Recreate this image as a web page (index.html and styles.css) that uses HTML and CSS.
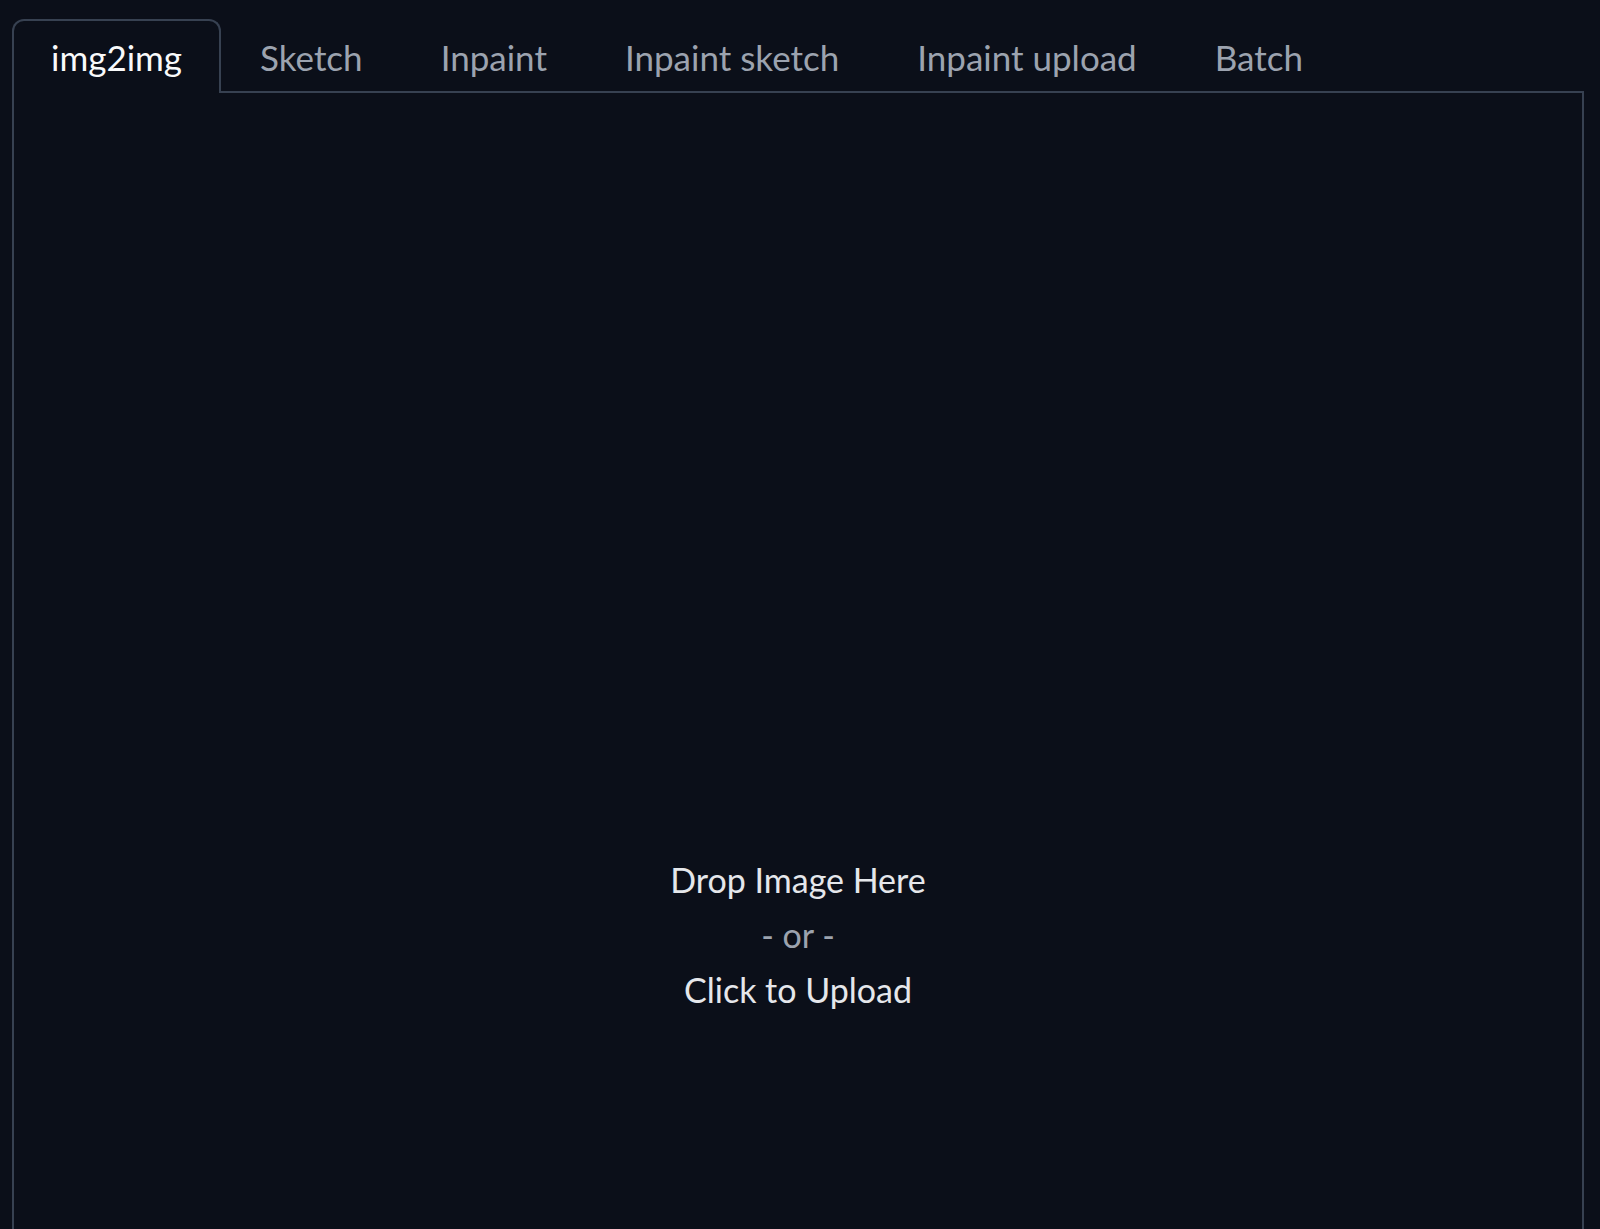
FILE: index.html
```html
<!DOCTYPE html>
<html lang="en">
<head>
<meta charset="utf-8">
<title>img2img</title>
<link rel="stylesheet" href="styles.css">
</head>
<body>
<div class="tabs">
  <div class="tabnav">
    <button class="tab active">img2img</button>
    <button class="tab">Sketch</button>
    <button class="tab">Inpaint</button>
    <button class="tab">Inpaint sketch</button>
    <button class="tab">Inpaint upload</button>
    <button class="tab">Batch</button>
  </div>
  <div class="panel">
    <div class="drop">
      <span class="line">Drop Image Here</span>
      <span class="line or">- or -</span>
      <span class="line">Click to Upload</span>
    </div>
  </div>
</div>
</body>
</html>
```

FILE: styles.css
```css
html, body {
  margin: 0;
  height: 100%;
  overflow: hidden;
  background: #0b0f19;
}
body {
  font-family: Lato, "Noto Sans", sans-serif;
  padding: 19px 16px 0 12px;
  box-sizing: border-box;
}
.tabs {
  display: flex;
  flex-direction: column;
}
.tabnav {
  display: flex;
  border-bottom: 2px solid #374151;
}
.tab {
  font-family: inherit;
  font-size: 35px;
  color: #9ca3af;
  background: transparent;
  border: 2px solid transparent;
  border-bottom: none;
  border-radius: 12px 12px 0 0;
  padding: 0 37px;
  height: 74px;
  margin-bottom: -2px;
  line-height: 1;
  cursor: pointer;
}
.tab.active {
  color: #f9fafb;
  border-color: #374151;
  background: #0b0f19;
}
.panel {
  border-left: 2px solid #374151;
  border-right: 2px solid #374151;
  height: 1700px;
}
.drop {
  display: flex;
  flex-direction: column;
  align-items: center;
  padding-top: 759px;
  font-size: 34px;
  line-height: 55px;
  color: #e5e7eb;
}
.or {
  color: #9ca3af;
}
```
